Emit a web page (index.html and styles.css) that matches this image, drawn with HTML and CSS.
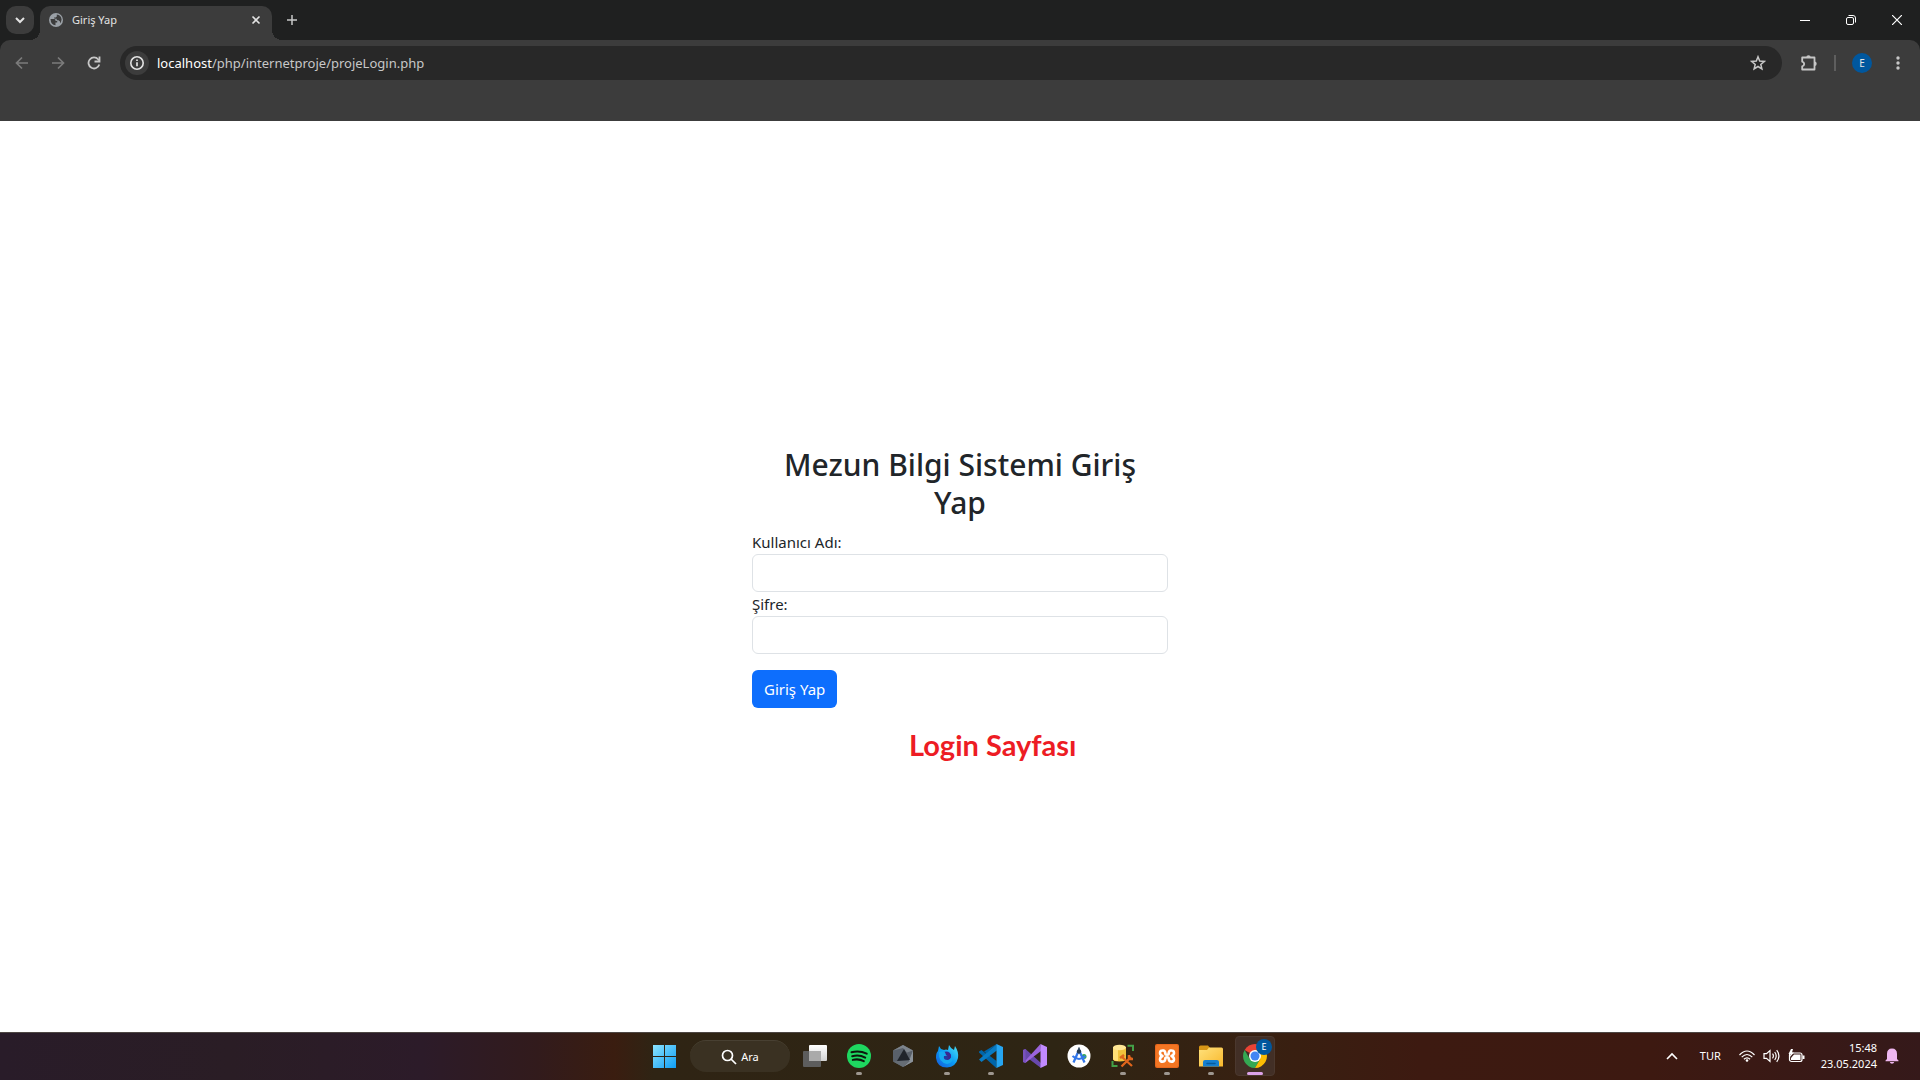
FILE: index.html
```html
<!DOCTYPE html>
<html lang="tr">
<head>
<meta charset="utf-8">
<title>Giriş Yap</title>
<link rel="stylesheet" href="styles.css">
</head>
<body>
<header class="browser">
  <div class="titlebar">
    <button class="tab-search" aria-label="Sekmelerde ara"><svg width="12" height="12" viewBox="0 0 12 12" fill="none" stroke="#e3e3e3" stroke-width="2"><path d="M2 4l4 4 4-4"/></svg></button>
    <div class="tab">
      <svg width="14" height="14" viewBox="0 0 14 14"><circle cx="7" cy="7" r="7" fill="#9aa0a6"/><path d="M1.500 6h3.700q1.300 0 1.300 1.300V8h1.700v1.500H6.500v2.800Q1.800 11.800 1.500 6zM7.800 1.600q4.300.6 4.800 5-.2 2.200-1.600 3.700V8.500L9.500 7.200H7.700V5.800H5.500L5 4.500h1.700L7.800 3.500z" fill="#3c3c3c"/></svg>
      <span class="tab-title">Giriş Yap</span>
      <button class="icon-button tab-close" aria-label="Sekmeyi kapat"><svg width="10" height="10" viewBox="0 0 10 10" stroke="#e3e3e3" stroke-width="1.600"><path d="M1.500 1.500l7 7M8.500 1.500l-7 7"/></svg></button>
    </div>
    <button class="icon-button new-tab" aria-label="Yeni sekme"><svg width="12" height="12" viewBox="0 0 12 12" stroke="#c7c7c7" stroke-width="1.500"><path d="M6 1v10M1 6h10"/></svg></button>
    <div class="window-controls">
      <button class="icon-button" aria-label="Küçült"><svg width="10" height="10" viewBox="0 0 10 10" stroke="#fff"><path d="M0 5.500h10"/></svg></button>
      <button class="icon-button" aria-label="Geri yükle"><svg width="10" height="10" viewBox="0 0 10 10" fill="none" stroke="#fff"><rect x=".5" y="2.500" width="7" height="7" rx="1.500"/><path d="M2.500.5H7Q9.500.5 9.500 3v4.500"/></svg></button>
      <button class="icon-button" aria-label="Kapat"><svg width="10" height="10" viewBox="0 0 10 10" stroke="#fff" stroke-width="1.200"><path d="M0 0l10 10M10 0L0 10"/></svg></button>
    </div>
  </div>
  <div class="toolbar">
    <nav class="nav">
      <button class="icon-button" aria-label="Geri"><svg width="14" height="14" viewBox="0 0 14 14" fill="none" stroke="#7b7b7b" stroke-width="1.700"><path d="M13 7H2M7 1.500L1.500 7 7 12.500"/></svg></button>
      <button class="icon-button" aria-label="İleri"><svg width="14" height="14" viewBox="0 0 14 14" fill="none" stroke="#7b7b7b" stroke-width="1.700"><path d="M1 7h11M7 1.500L12.500 7 7 12.500"/></svg></button>
      <button class="icon-button" aria-label="Yenile"><svg width="14" height="14" viewBox="0 0 14 14" fill="none" stroke="#c7c7c7" stroke-width="1.800"><path d="M12.300 8.500A5.500 5.500 0 1 1 11.300 3.500L12 4.500"/><path d="M12.500 .5v5h-5"/></svg></button>
    </nav>
    <div class="omnibox">
      <button class="icon-button site-info" aria-label="Site bilgileri"><svg width="14" height="14" viewBox="0 0 14 14" fill="none" stroke="#e3e3e3"><circle cx="7" cy="7" r="6.200" stroke-width="1.600"/><path d="M7 6.200v4M7 3.500v1.600" stroke-width="1.700"/></svg></button>
      <span class="url"><span class="host">localhost</span>/php/internetproje/projeLogin.php</span>
      <button class="icon-button star" aria-label="Yer işareti ekle"><svg width="16" height="16" viewBox="0 0 16 16" fill="none" stroke="#c7c7c7" stroke-width="1.500"><path d="M8 1.800l1.700 4.300 4.600.3-3.500 3 1.100 4.500L8 11.500l-3.900 2.400 1.100-4.500-3.500-3 4.600-.3z"/></svg></button>
    </div>
    <button class="icon-button tool" aria-label="Uzantılar"><svg width="18" height="18" viewBox="0 0 18 18"><path d="M2.200 3.500h12.300v12H2.200v-3.200q2-.5 2-2.300t-2-2.300z" fill="none" stroke="#c7c7c7" stroke-width="1.800" stroke-linejoin="round"/><path d="M6.300 3.500a2.200 2.200 0 0 1 4.400 0zM14.500 7.500a2.200 2.200 0 0 1 0 4.400z" fill="#c7c7c7"/></svg></button>
    <span class="divider"></span>
    <button class="icon-button tool" aria-label="Profil"><span class="avatar">E</span></button>
    <button class="icon-button tool" aria-label="Menü"><svg width="4" height="16" viewBox="0 0 4 16" fill="#c7c7c7"><circle cx="2" cy="3" r="1.700"/><circle cx="2" cy="8" r="1.700"/><circle cx="2" cy="13" r="1.700"/></svg></button>
  </div>
</header>

<main class="page">
  <form class="login">
    <h2 class="login-title">Mezun Bilgi Sistemi Giriş Yap</h2>
    <label class="login-label" for="username">Kullanıcı Adı:</label>
    <input class="login-input" id="username" type="text">
    <label class="login-label" for="password">Şifre:</label>
    <input class="login-input" id="password" type="password">
    <button class="login-button" type="button">Giriş Yap</button>
    <p class="note">Login Sayfası</p>
  </form>
</main>

<footer class="taskbar">
  <div class="apps">
    <button class="app" aria-label="Başlat"><svg width="24" height="24" viewBox="0 0 24 24"><defs><linearGradient id="win" x2="1" y2="1"><stop stop-color="#8be4ff"/><stop offset="1" stop-color="#0e9df5"/></linearGradient></defs><path d="M0 1h11v11H0zM12 1h11v11H12zM0 13h11v11H0zM12 13h11v11H12z" fill="url(#win)"/></svg></button>
    <button class="search"><svg width="16" height="16" viewBox="0 0 16 16" fill="none" stroke="#fff" stroke-width="1.700"><circle cx="6.500" cy="6.500" r="5"/><path d="M10 10l5 5"/></svg>Ara</button>
    <button class="app" aria-label="Görev görünümü"><svg width="24" height="24" viewBox="0 0 24 24"><defs><linearGradient id="tv" x2="0" y2="1"><stop stop-color="#fff"/><stop offset="1" stop-color="#d2d2d2"/></linearGradient></defs><rect y="7" width="18" height="16" rx="1" fill="#5d5d5d"/><rect x="6" y="1" width="18" height="16" rx="1" fill="url(#tv)"/><path d="M6 7h12v10H6z" fill="#aaa"/></svg></button>
    <button class="app running" aria-label="Spotify"><svg width="24" height="24" viewBox="0 0 24 24"><circle cx="12" cy="12" r="12" fill="#1ed760"/><path d="M4.500 8.200q8-2.200 15.200 1.500M5.200 12.200q7-1.900 13 1.400M5.800 15.900q6-1.500 11 1.300" fill="none" stroke="#0d170d" stroke-width="2" stroke-linecap="round"/></svg></button>
    <button class="app" aria-label="Unity"><svg width="24" height="24" viewBox="0 0 24 24"><path d="M12 1l10 5.500v11L12 23 2 17.500v-11z" fill="#59606a"/><path d="M12 1l10 5.500-6 2L12 4 2 6.500z" fill="#7d848c"/><path d="M22 6.500v11L12 23l6-6z" fill="#8b9299"/><path d="M2 17.500L12 23l7-6H7z" fill="#666d75"/><path d="M13 5l6 11-13 1z" fill="#20242b"/></svg></button>
    <button class="app running" aria-label="Firefox Developer Edition"><svg width="24" height="24" viewBox="0 0 24 24"><defs><linearGradient id="ff" x1="1" x2="0" y2="1"><stop stop-color="#50e6f5"/><stop offset=".5" stop-color="#0a9bf5"/><stop offset="1" stop-color="#1657d9"/></linearGradient></defs><path d="M4 2l2 3 3 1q2-1 4 0l1-5q2 4 5 5l1-4q4 6 3 12-2 9-11 9.500Q2 23.500 1 14 .8 9 3 7z" fill="url(#ff)"/><circle cx="11.500" cy="12" r="4.500" fill="#2438a0"/><path d="M4 8q4-2 7 1l3 1q-2 2.500-5 2-1 4 3.500 4 5-1 4-6 4 8-4.500 10Q3 18 4 8z" fill="#16a8f0"/><path d="M10 8q6 0 6 5-1 3-4 2.500 3-3-1-4.500z" fill="#3c278f"/></svg></button>
    <button class="app running" aria-label="Visual Studio Code"><svg width="24" height="24" viewBox="0 0 24 24"><path d="M17.500 0L7.200 9.700 2.500 6 0 7.500v1l17.500 15.700V17L5 7.500z" fill="#0065a9"/><path d="M0 15.500L2.500 18 17.800 6.500V0L0 15.500z" fill="#087bc4"/><path d="M17.500 0L24 3v18l-6.500 3z" fill="#26a6f2"/></svg></button>
    <button class="app" aria-label="Visual Studio"><svg width="24" height="24" viewBox="0 0 24 24"><path d="M0 6l2.500-1 15.500 14v5L6 15l-3.500 4L0 18z" fill="#6848ad"/><path d="M17.500 0L2.500 16.500v2.300L18 7z" fill="#9b64dc"/><path d="M17.500 0L24 3v18l-6.500 3z" fill="#c18aff"/><path d="M0 6l2.500-1v14L0 18z" fill="#7952bd"/></svg></button>
    <button class="app" aria-label="Android Studio"><svg width="24" height="24" viewBox="0 0 24 24"><circle cx="12" cy="12" r="11.500" fill="#fff"/><circle cx="17" cy="12.500" r="2.500" fill="#35a853"/><path d="M12 6L6.500 18.500M12 6l5.500 12.500" stroke="#3478ea" stroke-width="2.300"/><path d="M5.500 12q6.500 6 13 0" fill="none" stroke="#3478ea" stroke-width="2"/><circle cx="12" cy="7.500" r="2.200" fill="#263d53"/><path d="M12 3.500v3" stroke="#263d53" stroke-width="1.600"/></svg></button>
    <button class="app running" aria-label="SQL Server Management Studio"><svg width="24" height="24" viewBox="0 0 24 24"><path d="M16.500 1.700H22V7M1.500 17v5h5" fill="none" stroke="#43a047" stroke-width="2"/><path d="M2 3v12q0 2.500 6.500 2.500T15 15V3z" fill="#f0c13b"/><path d="M2 3h5v14q-5-.5-5-2z" fill="#ffdf76"/><ellipse cx="8.500" cy="3.500" rx="6.500" ry="2.800" fill="#ffe694"/><path d="M11 13l10 9M20 13l-9.500 9.500" stroke="#df651c" stroke-width="2.300"/><path d="M9 14l4-3M18 11v4h4" fill="none" stroke="#df651c" stroke-width="2.500"/></svg></button>
    <button class="app running" aria-label="XAMPP"><svg width="24" height="24" viewBox="0 0 24 24"><rect width="24" height="24" rx="2" fill="#e9671d"/><rect x="1" y="1" width="22" height="22" rx="2" fill="#f37623"/><path d="M8.500 6.500Q5 6 5 9q0 2 2.500 3Q5 13 5 15.500q0 2.500 3.500 2 1.800-.5 1.800-3 0-1.200 1.700-1.200t1.700 1.200q0 2.500 1.800 3 3.500.5 3.500-2 0-2.500-2.500-3.500Q19 11 19 9q0-3-3.500-2.500-1.800.5-1.800 3 0 1.200-1.700 1.200t-1.700-1.200q0-2.500-1.800-3z" fill="none" stroke="#fff" stroke-width="2.600" stroke-linejoin="round"/></svg></button>
    <button class="app running" aria-label="Dosya Gezgini"><svg width="24" height="24" viewBox="0 0 24 24"><defs><linearGradient id="folder" x2="1" y2="1"><stop stop-color="#ffe17c"/><stop offset="1" stop-color="#f8b82c"/></linearGradient></defs><path d="M0 3q0-1.500 1.500-1.500H9l2 2.500h10v5H0z" fill="#d79616"/><path d="M0 6h8l2-2.500h12.500Q24 3.500 24 5v17.500H0z" fill="url(#folder)"/><path d="M4 22.500V18q0-2 2-2h12q2 0 2 2v4.500z" fill="#167fd0"/><path d="M8 19.500h8" stroke="#075b9d" stroke-width="1.500" stroke-linecap="round"/></svg></button>
    <button class="app active" aria-label="Google Chrome"><svg width="24" height="24" viewBox="0 0 24 24"><path d="M12 12L1.610 6A12 12 0 0 1 22.390 6z" fill="#ea4335"/><path d="M1.610 6A12 12 0 0 0 12 24l5.200-9L12 12 6.800 15z" fill="#34a853"/><path d="M22.390 6A12 12 0 0 1 12 24l5.200-9L12 6z" fill="#fbbc04"/><circle cx="12" cy="12" r="6" fill="#fff"/><circle cx="12" cy="12" r="4.500" fill="#4285f4"/></svg><span class="badge">E</span></button>
  </div>
  <div class="tray">
    <button class="icon-button" aria-label="Gizli simgeler"><svg width="12" height="8" viewBox="0 0 12 8" fill="none" stroke="#fff" stroke-width="1.600"><path d="M1 7l5-5 5 5"/></svg></button>
    <button class="language">TUR</button>
    <button class="status" aria-label="Ağ, ses ve pil">
      <svg width="16" height="14" viewBox="0 0 16 14" fill="none" stroke="#fff" stroke-width="1.200"><path d="M.5 6Q8-2 15.500 6M2.700 8.200q5.300-5.400 10.600 0M4.900 10.300q3.100-3 6.200 0"/><circle cx="8" cy="11.500" r="1.300" fill="#fff" stroke="none"/></svg>
      <svg width="17" height="14" viewBox="0 0 17 14" fill="none" stroke="#fff" stroke-width="1.200"><path d="M1 4.700h2.500L7 1.500v11L3.500 9.300H1zM9.500 4.700q1.800 2.300 0 4.600M11.700 3q3 4 0 8M13.700 1.200q4.500 5.800 0 11.600"/></svg>
      <svg width="17" height="14" viewBox="0 0 17 14"><rect x="1.500" y="4" width="12.500" height="8.500" rx="2" fill="none" stroke="#fff" stroke-width="1.200"/><path d="M6 5.500h6.500V11H3V9zM14.500 6.500h2v3.500h-2zM3 0L.5 5h2L1.500 8.500 6 3.500H4L5 0z" fill="#fff"/></svg>
    </button>
    <button class="clock"><span>15:48</span><span>23.05.2024</span></button>
    <button class="icon-button" aria-label="Bildirimler"><svg width="14" height="16" viewBox="0 0 14 16" fill="#efb7f0"><path d="M2 11V6q0-5.500 5-5.500T12 6v5l1.500 1.500v.8H.5v-.8zM4.800 14h4.400Q8.800 15.700 7 15.700T4.800 14z"/></svg></button>
  </div>
</footer>
</body>
</html>
```
FILE: styles.css
```css
* {
  box-sizing: border-box;
}

body {
  margin: 0;
  min-height: 100vh;
  display: flex;
  flex-direction: column;
  background: #fff;
  color: #212529;
  font-family: "Noto Sans", "Open Sans", sans-serif;
  font-size: 15px;
  line-height: 24px;
}

button {
  border: 0;
  padding: 0;
  background: none;
  color: inherit;
  font: inherit;
}

svg {
  display: block;
  flex: none;
}

.icon-button {
  display: flex;
  align-items: center;
  justify-content: center;
}

/* Browser frame */

.browser {
  background: #1f2020;
  color: #e3e3e3;
}

.titlebar {
  display: flex;
  height: 40px;
  padding-left: 6px;
}

.tab-search {
  display: flex;
  align-items: center;
  justify-content: center;
  width: 28px;
  height: 28px;
  margin-top: 6px;
  border-radius: 10px;
  background: #3c3c3c;
}

.tab {
  position: relative;
  display: flex;
  align-items: center;
  gap: 9px;
  width: 232px;
  margin: 6px 0 0 6px;
  padding: 0 10px 6px 9px;
  border-radius: 10px 10px 0 0;
  background: #3c3c3c;
  font-size: 11px;
}

.tab::before,
.tab::after {
  content: "";
  position: absolute;
  bottom: 0;
  width: 10px;
  height: 10px;
}

.tab::before {
  right: 100%;
  background: radial-gradient(circle at 0 0, transparent 10px, #3c3c3c 10px);
}

.tab::after {
  left: 100%;
  background: radial-gradient(circle at 100% 0, transparent 10px, #3c3c3c 10px);
}

.tab-title {
  flex: 1;
}

.tab-close {
  width: 12px;
  height: 20px;
}

.new-tab {
  width: 40px;
}

.window-controls {
  display: flex;
  margin-left: auto;
}

.window-controls .icon-button {
  width: 46px;
}

.toolbar {
  display: flex;
  align-items: center;
  padding: 6px 4px 41px;
  border-radius: 10px 10px 0 0;
  background: #3c3c3c;
}

.nav {
  display: flex;
  margin-right: 8px;
}

.nav .icon-button {
  width: 36px;
  height: 34px;
}

.omnibox {
  display: flex;
  flex: 1;
  align-items: center;
  gap: 8px;
  height: 34px;
  margin-right: 9px;
  padding: 0 12px 0 5px;
  border-radius: 17px;
  background: #282828;
}

.site-info {
  width: 24px;
  height: 24px;
  border-radius: 12px;
  background: #3c3c3c;
}

.url {
  flex: 1;
  color: #c7c7c7;
  font-size: 13px;
}

.host {
  color: #fff;
}

.star {
  width: 24px;
  height: 24px;
}

.tool {
  width: 36px;
  height: 34px;
}

.divider {
  width: 2px;
  height: 16px;
  margin: 0 8px 0 7px;
  background: #5e5e5e;
}

.avatar {
  width: 20px;
  height: 20px;
  border-radius: 10px;
  background: #00579e;
  font-size: 10px;
  line-height: 20px;
}

/* Login page */

.page {
  display: flex;
  flex: 1;
  align-items: center;
  justify-content: center;
}

.login {
  position: relative;
  width: 416px;
  max-width: 100%;
}

.login-title {
  margin: 0 0 8px;
  padding: 0 16px;
  font-size: 30px;
  font-weight: 500;
  line-height: 38px;
  text-align: center;
}

.login-label {
  display: block;
}

.login-input {
  display: block;
  width: 100%;
  height: 38px;
  padding: 6px 12px;
  border: 1px solid #dee2e6;
  border-radius: 6px;
  background: #fff;
  color: inherit;
  font: inherit;
}

.login-button {
  display: block;
  margin-top: 16px;
  padding: 7px 12px;
  border-radius: 6px;
  background: #0d6efd;
  color: #fff;
}

.note {
  position: absolute;
  top: 100%;
  left: 157px;
  margin: 18px 0 0;
  color: #ed1c24;
  font-family: Lato, sans-serif;
  font-size: 29px;
  font-weight: 700;
  line-height: 38px;
  white-space: nowrap;
}

/* Taskbar */

.taskbar {
  display: grid;
  grid-template-columns: 1fr auto 1fr;
  align-items: center;
  height: 48px;
  box-shadow: inset 0 1px #4d4643;
  background: linear-gradient(90deg, #291c29 0%, #2a1d25 12%, #2c1b29 22%, #321b1c 28%, #3a1d10 32%, #2f2414 34%, #2e2514 55%, #382011 66%, #3d1a11 74%, #3d1911 86%, #35191a 100%);
  color: #fff;
  font-size: 11px;
}

.apps {
  display: flex;
  grid-column: 2;
  align-items: center;
  gap: 4px;
}

.app {
  position: relative;
  display: flex;
  align-items: center;
  justify-content: center;
  width: 40px;
  height: 40px;
  border-radius: 4px;
}

.search {
  display: flex;
  align-items: center;
  justify-content: center;
  gap: 4px;
  width: 100px;
  height: 32px;
  margin: 0 1px;
  border-top: 1px solid #484032;
  border-radius: 16px;
  background: #3a3122;
}

.running::after,
.active::after {
  content: "";
  position: absolute;
  bottom: 1px;
  width: 6px;
  height: 3px;
  border-radius: 2px;
  background: #9e9790;
}

.active {
  border: 1px solid #4b382e;
  background: #422f26;
}

.active::after {
  bottom: 0;
  width: 16px;
  background: #dca2e8;
}

.badge {
  position: absolute;
  top: 2px;
  right: 2px;
  width: 16px;
  height: 16px;
  border-radius: 8px;
  background: #00579e;
  font-size: 9px;
  line-height: 16px;
}

.tray {
  display: flex;
  align-items: center;
  justify-content: flex-end;
  padding-right: 21px;
}

.language {
  margin: 0 18px 0 22px;
}

.status {
  display: flex;
  gap: 8px;
  margin-right: 16px;
}

.clock {
  display: flex;
  flex-direction: column;
  margin-right: 8px;
  line-height: 16px;
  text-align: right;
}
```
